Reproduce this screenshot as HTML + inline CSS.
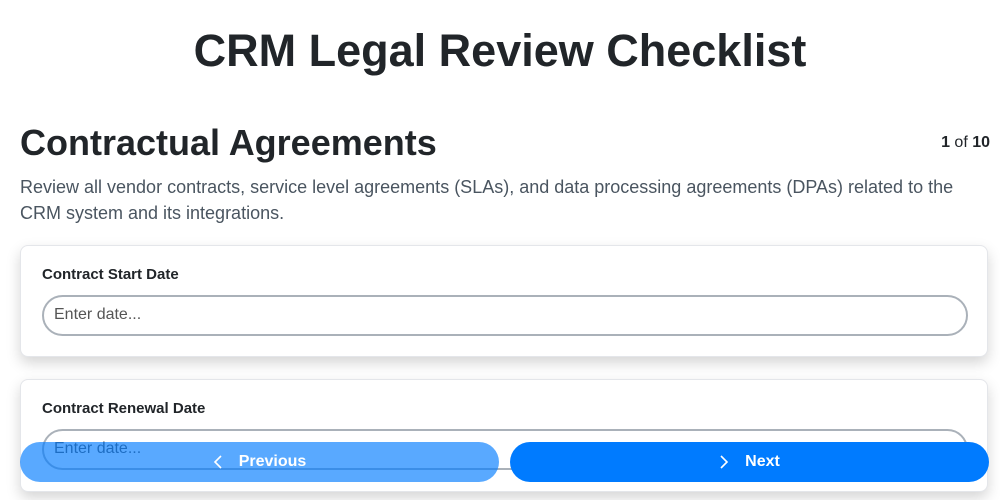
<!DOCTYPE html>
<html><head><style>
*{box-sizing:border-box;margin:0;padding:0}
html,body{width:1000px;height:500px;overflow:hidden}
body{background:#fff;font-family:"Liberation Sans",sans-serif;color:#212529;position:relative}
h1{position:absolute;top:25px;left:0;width:1000px;text-align:center;font-size:45px;font-weight:bold}
h2{position:absolute;top:122px;left:20px;font-size:36px;font-weight:bold}
.cnt{position:absolute;top:134px;right:10px;font-size:16px}
.desc{position:absolute;top:174px;left:20px;width:950px;font-size:18px;line-height:26px;color:#4a5560}
.card{position:absolute;left:20px;width:968px;background:#fff;border:1px solid #e4e6ea;border-radius:8px;box-shadow:0 6px 14px rgba(0,0,0,.17)}
.lbl{position:absolute;left:21px;font-size:15px;font-weight:bold}
.inp{position:absolute;left:21px;width:926px;height:41px;border:2px solid #aab1b9;border-radius:21px;font-size:16px;color:#555;padding:9px 10px}
.btn{position:absolute;top:442px;height:40px;border-radius:20px;color:#fff;font-size:16px;font-weight:bold;display:flex;align-items:center;justify-content:center;gap:16px}
</style></head><body>
<h1>CRM Legal Review Checklist</h1>
<h2>Contractual Agreements</h2>
<div class="cnt"><b>1</b> of <b>10</b></div>
<div class="desc">Review all vendor contracts, service level agreements (SLAs), and data processing agreements (DPAs) related to the CRM system and its integrations.</div>
<div class="card" style="top:245px;height:112px"><div class="lbl" style="top:20px">Contract Start Date</div><div class="inp" style="top:49px">Enter date...</div></div>
<div class="card" style="top:379px;height:113px"><div class="lbl" style="top:20px">Contract Renewal Date</div><div class="inp" style="top:49px">Enter date...</div></div>
<div class="btn" style="left:20px;width:479px;background:rgba(0,123,255,.65)"><svg width="10" height="16" viewBox="0 0 10 16"><path d="M8 2L2 8l6 6" stroke="#fff" stroke-width="1.6" fill="none"/></svg>Previous</div>
<div class="btn" style="left:510px;width:479px;background:#007bff"><svg width="10" height="16" viewBox="0 0 10 16"><path d="M2 2l6 6-6 6" stroke="#fff" stroke-width="1.6" fill="none"/></svg>Next</div>
</body></html>
